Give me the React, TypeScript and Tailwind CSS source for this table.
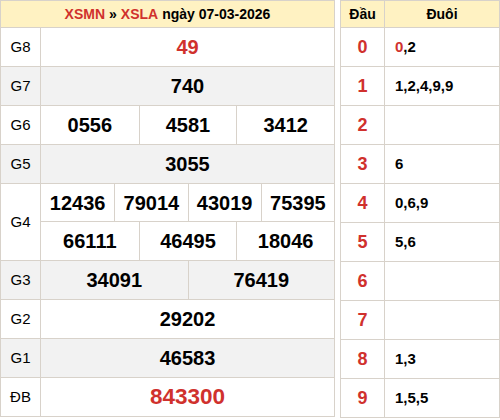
import React from 'react';

const rows: { label: string; nums: string[][]; gray: boolean; red?: boolean; big?: boolean }[] = [
  { label: 'G8', nums: [['49']], gray: false, red: true },
  { label: 'G7', nums: [['740']], gray: true },
  { label: 'G6', nums: [['0556', '4581', '3412']], gray: false },
  { label: 'G5', nums: [['3055']], gray: true },
  { label: 'G4', nums: [['12436', '79014', '43019', '75395'], ['66111', '46495', '18046']], gray: false },
  { label: 'G3', nums: [['34091', '76419']], gray: true },
  { label: 'G2', nums: [['29202']], gray: false },
  { label: 'G1', nums: [['46583']], gray: true },
  { label: 'ĐB', nums: [['843300']], gray: false, red: true, big: true },
];

const spans: Record<number, string> = { 1: 'col-span-12', 2: 'col-span-6', 3: 'col-span-4', 4: 'col-span-3' };

const loto: { head: string; tail: React.ReactNode }[] = [
  { head: '0', tail: <><span className="text-[#d0312d]">0</span>,2</> },
  { head: '1', tail: '1,2,4,9,9' },
  { head: '2', tail: '' },
  { head: '3', tail: '6' },
  { head: '4', tail: '0,6,9' },
  { head: '5', tail: '5,6' },
  { head: '6', tail: '' },
  { head: '7', tail: '' },
  { head: '8', tail: '1,3' },
  { head: '9', tail: '1,5,5' },
];

export default function App() {
  return (
    <div className="flex w-[500px] h-[420px] gap-[5px] bg-white text-black" style={{ fontFamily: '"Liberation Sans", Arial, sans-serif' }}>
      <div className="w-[335px] border border-[#d8d2ca] self-start">
        <div className="h-[27px] bg-[#fff2c2] flex items-center justify-center text-[14px] font-bold border-b border-[#d8d2ca]">
          <span className="text-[#d0312d]">XSMN</span>
          <span className="mx-1">»</span>
          <span className="text-[#d0312d]">XSLA</span>
          <span className="ml-1">ngày 07-03-2026</span>
        </div>
        {rows.map((r, i) => (
          <div key={r.label} className={`flex ${i < rows.length - 1 ? 'border-b border-[#d8d2ca]' : ''} ${r.gray ? 'bg-[#f2f2f2]' : 'bg-white'}`}>
            <div className="w-[40px] shrink-0 border-r border-[#d8d2ca] flex items-center justify-center text-[15px]">{r.label}</div>
            <div className="flex-1 flex flex-col">
              {r.nums.map((line, j) => (
                <div key={j} className={`grid grid-cols-12 h-[38px] ${j < r.nums.length - 1 ? 'border-b border-[#d8d2ca]' : ''}`}>
                  {line.map((n, k) => (
                    <div
                      key={k}
                      className={`${spans[line.length]} flex items-center justify-center font-bold ${r.big ? 'text-[22.5px]' : 'text-[20px]'} ${r.red ? 'text-[#d0312d]' : ''} ${k > 0 ? 'border-l border-[#d8d2ca]' : ''}`}
                    >
                      {n}
                    </div>
                  ))}
                </div>
              ))}
            </div>
          </div>
        ))}
      </div>
      <div className="w-[160px] border border-[#d8d2ca] self-start">
        <div className="flex h-[27px] bg-[#fff2c2] border-b border-[#d8d2ca] text-[14px] font-bold">
          <div className="w-[44px] border-r border-[#d8d2ca] flex items-center justify-center">Đầu</div>
          <div className="flex-1 flex items-center justify-center">Đuôi</div>
        </div>
        {loto.map((l, i) => (
          <div key={l.head} className={`flex ${i < loto.length - 1 ? 'h-[39px] border-b border-[#d8d2ca]' : 'h-[38px]'}`}>
            <div className="w-[44px] border-r border-[#d8d2ca] flex items-center justify-center text-[18px] font-bold text-[#d0312d]">{l.head}</div>
            <div className="flex-1 flex items-center pl-[10px] text-[15px] font-bold">{l.tail}</div>
          </div>
        ))}
      </div>
    </div>
  );
}
